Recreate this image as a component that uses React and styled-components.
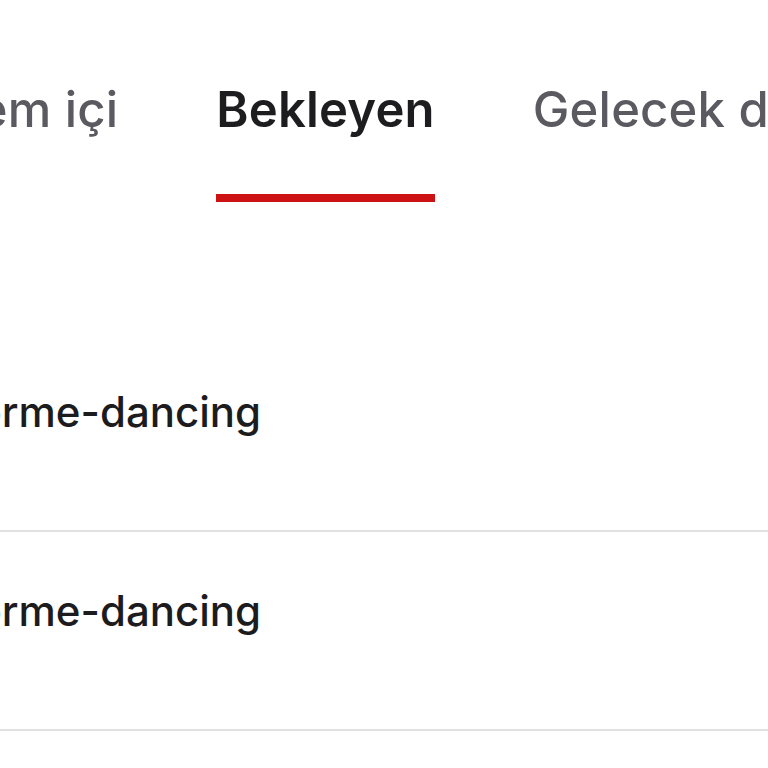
import React from "react";
import styled, { createGlobalStyle } from "styled-components";

const GlobalStyle = createGlobalStyle`
    html, body {
        margin: 0;
        padding: 0;
        background: #ffffff;
    }
    body {
        font-family: Inter, "Noto Sans", "Liberation Sans", sans-serif;
    }
`;

const tabs = [
    { label: "İşlem içi", active: false },
    { label: "Bekleyen", active: true },
    { label: "Gelecek dönem", active: false },
];

const rows = ["performe-dancing", "performe-dancing"];

const App = () => {
    return (
        <>
            <GlobalStyle />
            <StyledScreen>
                <TabBar>
                    {tabs.map((tab, i) => (
                        <Tab key={`tab-` + i} active={tab.active}>
                            {tab.label}
                        </Tab>
                    ))}
                </TabBar>
                <List>
                    {rows.map((row, i) => (
                        <Row key={`row-` + i}>
                            <RowTitle>{row}</RowTitle>
                        </Row>
                    ))}
                </List>
            </StyledScreen>
        </>
    );
};

const StyledScreen = styled.main`
    width: 768px;
    height: 768px;
    overflow: hidden;
    background: #ffffff;
    display: flex;
    flex-direction: column;
`;

const TabBar = styled.nav`
    display: flex;
    align-items: flex-start;
    gap: 98px;
    margin-left: -74px;
    padding-top: 80px;
    white-space: nowrap;
`;

const Tab = styled.div`
    flex: none;
    font-size: 49px;
    line-height: 60px;
    font-weight: ${(props) => (props.active ? 600 : 500)};
    color: ${(props) => (props.active ? "#1d1d1f" : "#5b5a60")};
    letter-spacing: 0.2px;
    padding-bottom: 54px;
    border-bottom: 8px solid ${(props) => (props.active ? "#cc1212" : "transparent")};
`;

const List = styled.section`
    display: flex;
    flex-direction: column;
    margin-top: 131px;
    margin-left: -106px;
`;

const Row = styled.div`
    display: flex;
    align-items: center;
    height: 199px;
    padding-bottom: 40px;
    box-sizing: border-box;
    border-bottom: 2px solid #e1e1e1;
`;

const RowTitle = styled.span`
    font-size: 42px;
    font-weight: 500;
    color: #1c1c1e;
    white-space: nowrap;
`;

export default App;
